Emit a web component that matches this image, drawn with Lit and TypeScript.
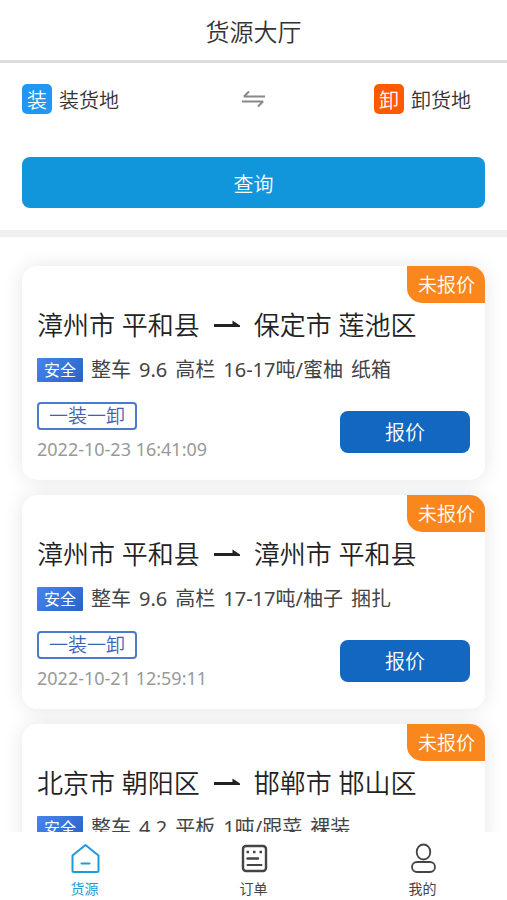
import { LitElement, html, css, svg, nothing } from "lit";
import { customElement, property, state } from "lit/decorators.js";
import { classMap } from "lit/directives/class-map.js";

interface Cargo {
  from: string;
  to: string;
  detail: string[];
  time?: string;
}

const CARGOS: Cargo[] = [
  { from: "漳州市 平和县", to: "保定市 莲池区", detail: ["整车", "9.6", "高栏", "16-17吨/蜜柚", "纸箱"], time: "2022-10-23 16:41:09" },
  { from: "漳州市 平和县", to: "漳州市 平和县", detail: ["整车", "9.6", "高栏", "17-17吨/柚子", "捆扎"], time: "2022-10-21 12:59:11" },
  { from: "北京市 朝阳区", to: "邯郸市 邯山区", detail: ["整车", "4.2", "平板", "1吨/跟菜", "裸装"] },
];

const homeIcon = svg`
  <path d="M16.500 2 L29.500 12.500 V27.500 Q29.500 29 28 29 H5 Q3.500 29 3.500 27.500 V12.500 Z" stroke-width="2" stroke-linejoin="round" />
  <path d="M12.500 20.500 H20.500" stroke-width="2" stroke-linecap="round" />`;

const orderIcon = svg`
  <rect x="5" y="3" width="23" height="25" rx="3" stroke-width="2.400" />
  <path d="M8.500 9 H11 M15 9 H17.500 M21.500 9 H24" stroke-width="2.400" />
  <path d="M9.500 15.500 H20" stroke-width="2.400" stroke-linecap="round" />
  <path d="M9.500 22 H23.500" stroke-width="2" stroke-linecap="round" />`;

const userIcon = svg`
  <ellipse cx="16.500" cy="9" rx="6.800" ry="7.500" stroke-width="1.800" />
  <rect x="5" y="19" width="23" height="10" rx="5" stroke-width="1.800" />`;

@customElement("cargo-card")
export class CargoCard extends LitElement {
  @property({ attribute: false }) cargo!: Cargo;

  static styles = css`
    :host {
      display: block;
      position: relative;
      box-sizing: border-box;
      padding: 40px 15px 19px;
      border-radius: 15px;
      background: #fff;
      box-shadow: 0 0 20px rgba(0, 0, 0, 0.1);
    }
    .status {
      position: absolute;
      top: 0;
      right: 0;
      padding: 2px 10px 0 11px;
      border-radius: 0 15px 0 15px;
      background: #fa871e;
      color: #fff;
      font-size: 19px;
      line-height: 35px;
    }
    .route {
      display: flex;
      align-items: center;
      gap: 14px;
      margin: 0;
      font-size: 26px;
      font-weight: 350;
      line-height: 38px;
      color: #222;
      white-space: nowrap;
    }
    .arrow {
      width: 26px;
      height: 12px;
      fill: #222;
    }
    .detail {
      display: flex;
      align-items: center;
      gap: 8px;
      margin: 14px 0 0;
      font-size: 20px;
      font-weight: 400;
      line-height: 24px;
      color: #444;
      white-space: nowrap;
    }
    .safe {
      padding: 0 7px;
      border-radius: 1px;
      background: linear-gradient(135deg, #4585ee, #2c62c6);
      color: #fff;
      font-size: 16px;
      line-height: 24px;
    }
    .foot {
      display: flex;
      align-items: center;
      justify-content: space-between;
      margin-top: 20px;
    }
    .tag {
      display: block;
      box-sizing: border-box;
      width: fit-content;
      padding: 0 10px;
      border: 2px solid #4b7ccb;
      border-radius: 4px;
      color: #3c62b4;
      font-size: 19px;
      line-height: 24px;
    }
    .time {
      display: block;
      margin-top: 7px;
      font-size: 18px;
      font-weight: 400;
      line-height: 24px;
      color: #999;
    }
    .quote {
      width: 130px;
      padding: 2px 0 0;
      border: 0;
      border-radius: 8px;
      background: #1268c0;
      color: #fff;
      font: inherit;
      font-size: 20px;
      line-height: 40px;
    }
  `;

  render() {
    const c = this.cargo;
    return html`
      <span class="status">未报价</span>
      <h2 class="route">
        <span>${c.from}</span>
        <svg class="arrow" viewBox="0 0 26 12" aria-hidden="true">
          <path d="M0 5 H18.500 V1.500 L26 6.500 V8 H0 Z" />
        </svg>
        <span>${c.to}</span>
      </h2>
      <p class="detail">
        <span class="safe">安全</span>
        ${c.detail.map((part) => html`<span>${part}</span> `)}
      </p>
      ${c.time
        ? html`<div class="foot">
            <div>
              <span class="tag">一装一卸</span>
              <time class="time">${c.time}</time>
            </div>
            <button class="quote" type="button">报价</button>
          </div>`
        : nothing}
    `;
  }
}

@customElement("app-root")
export class AppRoot extends LitElement {
  @state() private active = "货源";

  static styles = css`
    :host {
      display: flex;
      flex-direction: column;
      height: 100vh;
      background: #fff;
      color: #333;
      font-family: "Noto Sans", "Noto Sans CJK SC", sans-serif;
      font-weight: 350;
    }
    .header {
      flex: none;
      padding-top: 4px;
      border-bottom: 3px solid #ddd;
      text-align: center;
    }
    .title {
      margin: 0;
      font-size: 24px;
      font-weight: 350;
      line-height: 56px;
    }
    .search {
      flex: none;
      padding: 21px 22px 22px;
      border-bottom: 7px solid #f0f0f0;
    }
    .places {
      display: grid;
      grid-template-columns: 1fr auto 1fr;
      align-items: center;
      margin-bottom: 43px;
    }
    .place,
    .swap {
      display: flex;
      align-items: center;
      gap: 7px;
      padding: 0;
      border: 0;
      background: none;
      color: inherit;
      font: inherit;
      font-size: 20px;
      line-height: 30px;
    }
    .to {
      justify-self: end;
      margin-right: 14px;
    }
    .mark,
    .name {
      box-sizing: border-box;
      height: 30px;
      padding-top: 3px;
      line-height: 27px;
    }
    .mark {
      width: 30px;
      border-radius: 5px;
      background: #2196f3;
      color: #fff;
      text-align: center;
    }
    .unload {
      background: #ff5a00;
    }
    .swap svg {
      width: 24px;
      height: 18px;
      fill: none;
      stroke: #888;
      stroke-width: 2;
    }
    .query {
      display: block;
      width: 100%;
      padding: 4px 0 0;
      border: 0;
      border-radius: 8px;
      background: #1296db;
      color: #fff;
      font: inherit;
      font-size: 20px;
      line-height: 47px;
    }
    .list {
      flex: 1;
      min-height: 0;
      display: flex;
      flex-direction: column;
      gap: 15px;
      padding: 29px 22px;
      overflow-y: auto;
      scrollbar-width: none;
    }
    .list cargo-card {
      flex: none;
    }
    .tabs {
      flex: none;
      display: flex;
      background: #fff;
    }
    .tab {
      flex: 1;
      display: flex;
      flex-direction: column;
      align-items: center;
      gap: 3px;
      padding: 11px 0 1px;
      border: 0;
      background: none;
      color: #444;
      font: inherit;
      font-size: 14px;
      font-weight: 400;
      line-height: 21px;
    }
    .tab svg {
      width: 32px;
      height: 32px;
      fill: none;
      stroke: currentColor;
    }
    .tab.active {
      color: #1f9bdc;
    }
  `;

  private tab(label: string, icon: unknown) {
    return html`
      <button
        type="button"
        class=${classMap({ tab: true, active: this.active === label })}
        @click=${() => (this.active = label)}
      >
        <svg viewBox="0 0 32 32" aria-hidden="true">${icon}</svg>
        <span>${label}</span>
      </button>
    `;
  }

  render() {
    return html`
      <header class="header"><h1 class="title">货源大厅</h1></header>
      <section class="search">
        <div class="places">
          <button type="button" class="place">
            <span class="mark">装</span><span class="name">装货地</span>
          </button>
          <button type="button" class="swap" aria-label="交换">
            <svg viewBox="0 0 24 18" aria-hidden="true">
              <path d="M23 6.500 H2 L7 1.500 M0 11.500 H21 L16 16.500" stroke-linejoin="bevel" />
            </svg>
          </button>
          <button type="button" class="place to">
            <span class="mark unload">卸</span><span class="name">卸货地</span>
          </button>
        </div>
        <button type="button" class="query">查询</button>
      </section>
      <main class="list">
        ${CARGOS.map((c) => html`<cargo-card .cargo=${c}></cargo-card>`)}
      </main>
      <nav class="tabs">
        ${this.tab("货源", homeIcon)} ${this.tab("订单", orderIcon)} ${this.tab("我的", userIcon)}
      </nav>
    `;
  }
}
